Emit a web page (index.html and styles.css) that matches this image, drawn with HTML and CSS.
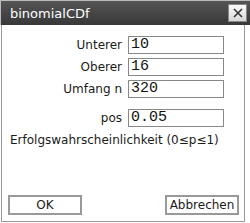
FILE: index.html
```html
<!DOCTYPE html>
<html>
<head>
<meta charset="utf-8">
<link rel="stylesheet" href="styles.css">
</head>
<body>
<div class="dialog">
  <div class="titlebar">
    <span class="title">binomialCDf</span>
    <span class="close"><svg width="12" height="12" viewBox="0 0 12 12"><path d="M2 2L10 10M10 2L2 10" stroke="#333" stroke-width="1.6"/></svg></span>
  </div>
  <div class="body">
    <div class="form">
      <div class="row"><span class="label">Unterer</span><span class="input">10</span></div>
      <div class="row"><span class="label">Oberer</span><span class="input">16</span></div>
      <div class="row"><span class="label">Umfang n</span><span class="input">320</span></div>
      <div class="row pos"><span class="label">pos</span><span class="input">0.05</span></div>
    </div>
    <div class="hint">Erfolgswahrscheinlichkeit (0≤p≤1)</div>
    <div class="buttons">
      <span class="btn">OK</span>
      <span class="btn">Abbrechen</span>
    </div>
  </div>
</div>
</body>
</html>
```
FILE: styles.css
```css
html, body { margin: 0; padding: 0; background: #fff; }
.dialog {
  width: 250px; height: 223px; box-sizing: border-box;
  display: flex; flex-direction: column;
  font-family: "DejaVu Sans", sans-serif;
}
.titlebar {
  height: 25px; box-sizing: border-box;
  background: linear-gradient(#555, #383838);
  border-top: 1px solid #bbb; border-left: 1px solid #bbb;
  display: flex; align-items: center; justify-content: space-between;
  padding: 0 3px 0 9px;
}
.title { color: #fff; font-size: 13px; }
.close {
  width: 19px; height: 18px; background: linear-gradient(#fafafa, #d8d8d8);
  border: 1px solid #888; box-sizing: border-box;
  display: flex; align-items: center; justify-content: center;
}
.body {
  flex: 1; margin: 0 5px 1px 1px;
  border-left: 1px solid #999; border-right: 1px solid #999; border-bottom: 1px solid #999;
  display: flex; flex-direction: column;
  padding: 11px 5px 6px 6px;
}
.form { display: flex; flex-direction: column; gap: 4px; }
.row { display: flex; align-items: center; gap: 6px; }
.row.pos { margin-top: 7px; }
.label { width: 114px; text-align: right; font-size: 12px; color: #1a1a1a; }
.input {
  width: 96px; height: 18px; box-sizing: border-box;
  border: 1px solid #888; font-family: "Liberation Mono", monospace;
  font-size: 15px; line-height: 16px; padding-left: 2px; color: #111;
}
.hint { margin-top: 6px; font-size: 12px; color: #1a1a1a; padding-left: 2px; }
.buttons { margin-top: auto; display: flex; justify-content: space-between; }
.btn {
  width: 74px; height: 20px; box-sizing: border-box;
  border: 2px solid #999; font-size: 12px; color: #1a1a1a;
  display: flex; align-items: center; justify-content: center;
}
```
